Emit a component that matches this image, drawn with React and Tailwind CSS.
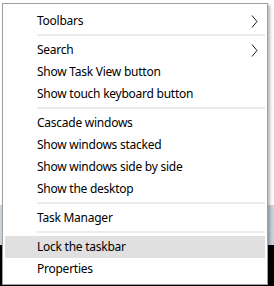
import { Fragment } from 'react'

const groups = [
  [
    { label: 'Toolbars', sub: true },
  ],
  [
    { label: 'Search', sub: true },
    { label: 'Show Task View button' },
    { label: 'Show touch keyboard button' },
  ],
  [
    { label: 'Cascade windows' },
    { label: 'Show windows stacked' },
    { label: 'Show windows side by side' },
    { label: 'Show the desktop' },
  ],
  [
    { label: 'Task Manager' },
  ],
  [
    { label: 'Lock the taskbar', hot: true },
    { label: 'Properties' },
  ],
]

function Chevron() {
  return (
    <svg width="7" height="13" viewBox="0 0 7 13" className="shrink-0">
      <polyline points="1,0.5 6,6.5 1,12.5" fill="none" stroke="#1a1a1a" strokeWidth="1" />
    </svg>
  )
}

function Item({ label, sub, hot }) {
  return (
    <div className={`flex items-center h-[22px] pl-[32px] pr-[7px] ${hot ? 'bg-[#e0e0e0]' : ''}`}>
      <span className="flex-1 text-[12px] text-black leading-none tracking-[-0.25px]">{label}</span>
      {sub && <Chevron />}
    </div>
  )
}

export default function App() {
  return (
    <div
      className="relative w-[274px] h-[286px] overflow-hidden"
      style={{ fontFamily: '"Segoe UI", "Noto Sans", "Open Sans", sans-serif' }}
    >
      {/* desktop behind the menu */}
      <div className="flex flex-col h-full">
        <div className="flex-1 bg-white" />
        <div className="h-[40px] bg-[#c9d3dc]" />
        <div className="h-[41px] bg-black" />
      </div>

      {/* context menu */}
      <div className="absolute left-[2px] top-[3px] w-[266px] h-[282px] bg-white border border-[#a0a0a0] shadow-[2px_2px_3px_rgba(0,0,0,0.3)] px-[2px] pt-[6px] pb-[3px]">
        {groups.map((g, gi) => (
          <Fragment key={gi}>
            {gi > 0 && (
              <div className="h-[7px] flex items-center pl-[32px]">
                <div className="h-px w-full bg-[#d7d7d7] -translate-y-[0.5px]" />
              </div>
            )}
            {g.map(it => <Item key={it.label} {...it} />)}
          </Fragment>
        ))}
      </div>
    </div>
  )
}
